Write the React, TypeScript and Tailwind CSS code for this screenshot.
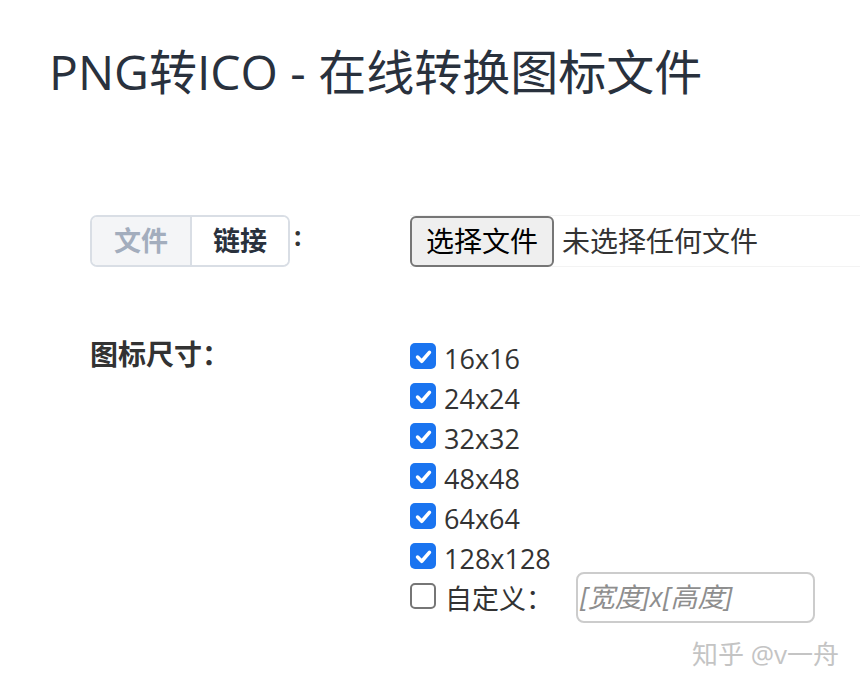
import React from "react";

const sizes = ["16x16", "24x24", "32x32", "48x48", "64x64", "128x128"];

function Check({ checked }: { checked: boolean }) {
  if (checked) {
    return (
      <span className="flex h-[26px] w-[26px] shrink-0 items-center justify-center rounded-[5px] bg-[#1a74f0]">
        <svg width="19" height="19" viewBox="0 0 16 16">
          <path d="M3 8.5 L6.5 12 L13 4.5" fill="none" stroke="#fff" strokeWidth="3" strokeLinecap="round" strokeLinejoin="round" />
        </svg>
      </span>
    );
  }
  return <span className="block h-[26px] w-[26px] shrink-0 rounded-[5px] border-2 border-[#767676] bg-white" />;
}

export default function App() {
  return (
    <div
      className="relative h-[688px] w-[860px] overflow-hidden bg-white text-[#333]"
      style={{ fontFamily: '"Open Sans", "Noto Sans CJK SC", sans-serif' }}
    >
      <h1 className="pl-[49px] pt-[43px] text-[48px] leading-[58px] text-[#29313d]">
        PNG转ICO - 在线转换图标文件
      </h1>

      <div className="mt-[114px] grid grid-cols-[320px_1fr] pl-[90px]">
        <div className="flex h-[52px] items-start">
          <div className="flex h-[52px] overflow-hidden rounded-[7px] border-2 border-[#d9dee5]">
            <span className="flex w-[98px] items-center justify-center bg-[#f4f5f7] text-[27px] font-bold text-[#a3adbd]">
              文件
            </span>
            <span className="flex w-[98px] items-center justify-center border-l-2 border-[#d9dee5] bg-white text-[27px] font-bold text-[#29313d]">
              链接
            </span>
          </div>
          <span className="ml-[4px] mt-[6px] text-[26px] font-bold leading-[30px]">:</span>
        </div>
        <div className="flex h-[52px] w-[480px] items-center border-y border-[#f3f3f3]">
          <span className="flex h-[51px] w-[144px] items-center justify-center rounded-[6px] border-2 border-[#767676] bg-[#efefef] text-[28px] text-black">
            选择文件
          </span>
          <span className="ml-[8px] text-[28px] text-[#333]">未选择任何文件</span>
        </div>

        <div className="mt-[72px] text-[28px] font-bold leading-[30px] text-[#333]">图标尺寸：</div>
        <div className="mt-[72px] flex flex-col">
          {sizes.map((s) => (
            <div key={s} className="flex h-[40px] items-center">
              <span className="-mt-[6px]">
                <Check checked />
              </span>
              <span className="ml-[8px] text-[27px] leading-[40px] text-[#333]">{s}</span>
            </div>
          ))}
          <div className="flex h-[40px] items-center">
            <span className="-mt-[6px]">
              <Check checked={false} />
            </span>
            <span className="ml-[9px] text-[27px] text-[#333]">自定义：</span>
            <div className="-mt-[4px] ml-[23px] flex h-[51px] w-[239px] items-center rounded-[8px] border-2 border-[#cccccc] pl-[2px] text-[27px] italic text-[#8e8e8e]">
              [宽度]x[高度]
            </div>
          </div>
        </div>
      </div>

      <div className="absolute left-[692px] top-[635px] text-[26px] text-[#c4c4c4]">知乎 @v一舟</div>
    </div>
  );
}
